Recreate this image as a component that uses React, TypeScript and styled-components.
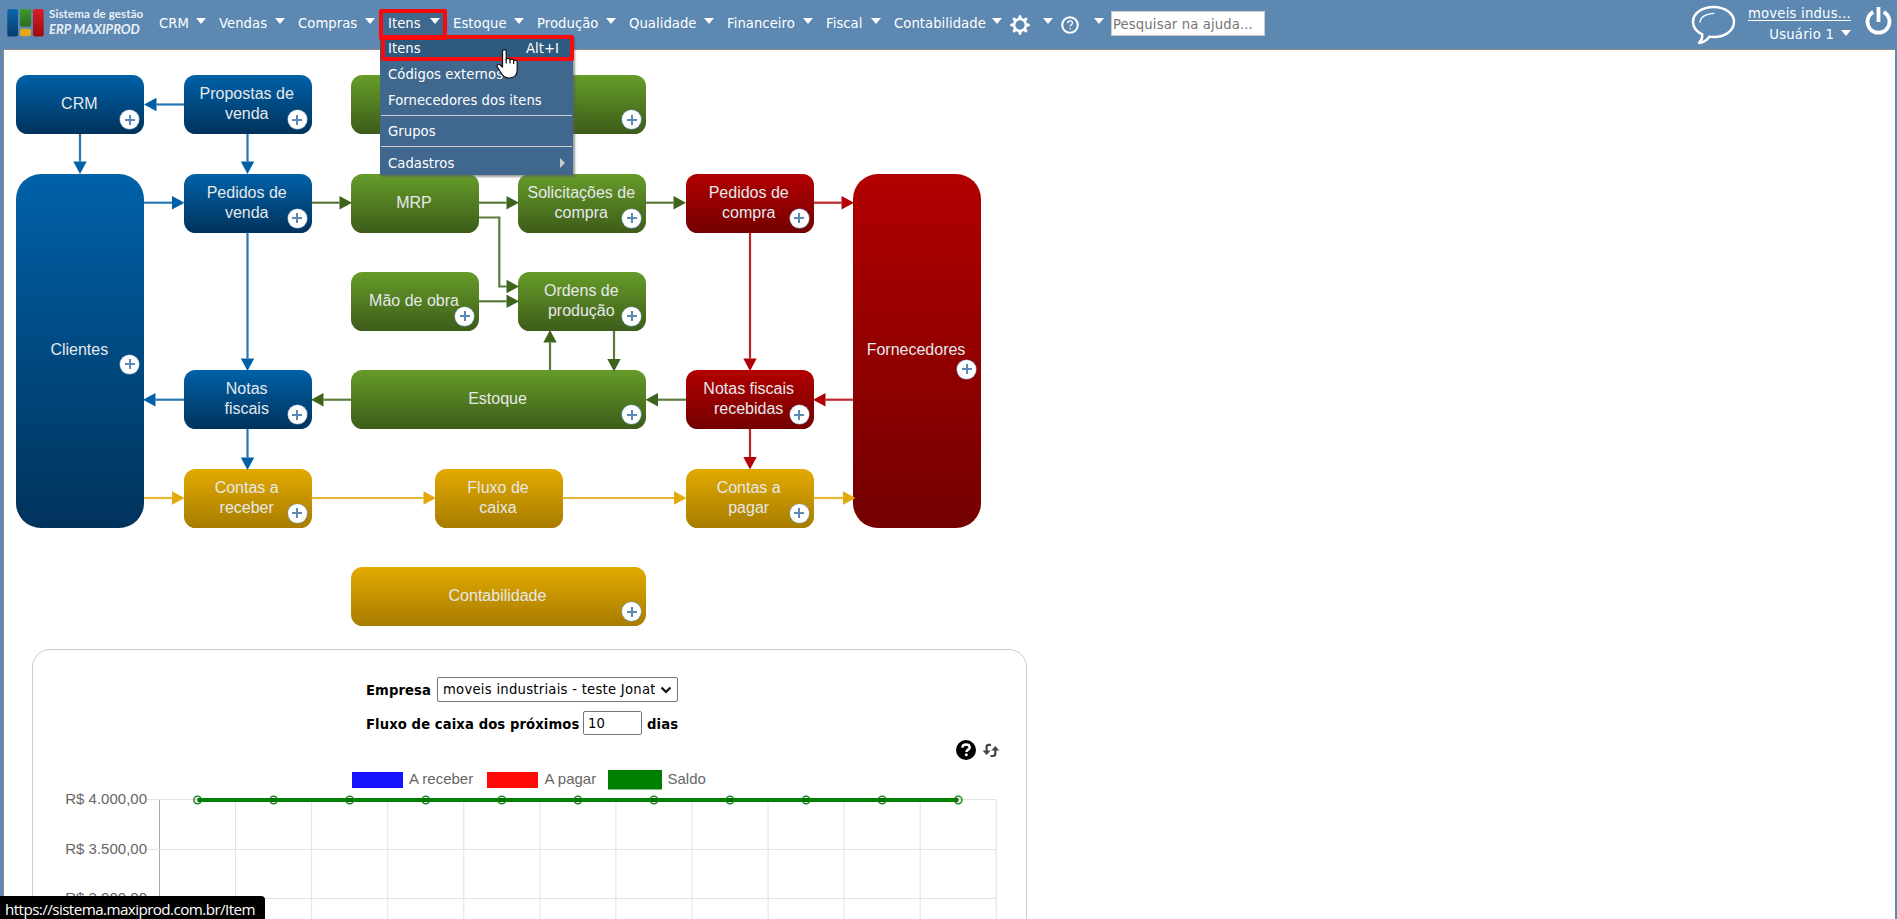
import React from 'react';
import styled, { createGlobalStyle, css } from 'styled-components';

const GlobalStyle = createGlobalStyle`
  * { box-sizing: border-box; }
  html, body { margin: 0; padding: 0; background: #fff; }
  body { overflow: hidden; font-family: Verdana, "DejaVu Sans", sans-serif; font-size: 13.2px; color: #000; }
`;

const Page = styled.div`
  height: 919px;
  display: flex;
  flex-direction: column;
  overflow: hidden;
  background: #5c88b2;
`;

/* ---------- top bar ---------- */

const TopBar = styled.header`
  position: relative;
  z-index: 2;
  flex: 0 0 49px;
  display: flex;
  align-items: flex-start;
  color: #fff;
`;

const Brand = styled.div`
  display: flex;
  width: 151px;
  padding: 8px 0 0 7px;
  gap: 5px;
`;

const BrandText = styled.div`
  font-family: Lato, sans-serif;
  font-weight: 700;
  color: #e9eff5;
  white-space: nowrap;
`;

const BrandTop = styled.div`
  font-size: 11.6px;
  line-height: 12px;
  letter-spacing: 0.08px;
`;

const BrandName = styled.div`
  font-size: 13px;
  line-height: 18px;
  font-style: italic;
`;

const Nav = styled.nav`
  display: flex;
`;

const NavItem = styled.div<{ $w: number; $open?: boolean }>`
  position: relative;
  width: ${(p) => p.$w}px;
  height: 36px;
  padding: 0 5px 0 8px;
  display: flex;
  align-items: center;
  justify-content: space-between;
  white-space: nowrap;
  letter-spacing: 0.05px;
  ${(p) =>
    p.$open &&
    css`
      &::before {
        content: '';
        position: absolute;
        z-index: -1;
        left: 0;
        right: 2px;
        top: 10px;
        bottom: 0;
        background: #40688e;
      }
    `}
`;

const NavLabel = styled.span`
  padding-top: 12px;
  line-height: 16px;
`;

const Caret = styled.i`
  width: 0;
  height: 0;
  margin-top: 6px;
  border: 5px solid transparent;
  border-top: 6px solid #fff;
  border-bottom: 0;
`;

const NavIcon = styled.span`
  display: flex;
  margin: 14px 0 0 -5px;
`;

const SearchInput = styled.input`
  width: 154px;
  height: 25px;
  margin: 11px 0 0 2px;
  padding: 1px 1px 0;
  border: 1px solid #ccc;
  background: #fff;
  font: inherit;
  letter-spacing: 0.13px;
  &::placeholder { color: #757575; opacity: 1; }
`;

const Highlight = styled.div<{ $x: number; $y: number; $w: number; $h: number }>`
  position: absolute;
  z-index: 3;
  left: ${(p) => p.$x}px;
  top: ${(p) => p.$y}px;
  width: ${(p) => p.$w}px;
  height: ${(p) => p.$h}px;
  border: 4px solid #fb0a0a;
  border-radius: 2px;
  pointer-events: none;
`;

const UserArea = styled.div`
  margin-left: auto;
  display: flex;
  align-items: flex-start;
  padding-right: 5px;
`;

const ChatButton = styled.span`
  display: flex;
  margin-top: 4px;
`;

const PowerButton = styled.span`
  display: flex;
  margin-top: 6px;
`;

const UserText = styled.div`
  width: 103px;
  margin: 6px 14px 0 12px;
  display: flex;
  flex-direction: column;
  align-items: flex-end;
  line-height: 16px;
  letter-spacing: 0.22px;
`;

const Company = styled.a`
  color: #fff;
  text-decoration: underline;
  text-underline-offset: 2px;
  white-space: nowrap;
  height: 20px;
`;

const UserName = styled.div`
  display: flex;
  gap: 7px;
  align-items: center;
  height: 17px;
  & > i { margin-top: -3px; }
`;

/* ---------- dropdown ---------- */

const Menu = styled.div`
  position: absolute;
  left: 0;
  top: 36px;
  width: 193px;
  height: 139px;
  padding-top: 1px;
  background: #40688e;
  box-shadow: 2px 2px 2px rgba(90, 90, 90, 0.6);
`;

const MenuRow = styled.div<{ $active?: boolean; $h?: number }>`
  height: ${(p) => p.$h ?? 26}px;
  margin-bottom: ${(p) => (p.$active ? 2 : 0)}px;
  padding: 0 14px 0 8px;
  display: flex;
  align-items: center;
  justify-content: space-between;
  background: ${(p) => (p.$active ? '#2e5a7f' : 'transparent')};
`;

const Divider = styled.div<{ $mt?: number }>`
  height: 1px;
  margin: ${(p) => p.$mt ?? 0}px 1px 0;
  background: #ccc;
`;

const SubCaret = styled.i`
  margin-right: -6px;
  border: 5px solid transparent;
  border-left: 5px solid #c9ccd0;
  border-right: 0;
`;

const Cursor = styled.svg`
  position: absolute;
  z-index: 4;
  left: 496px;
  top: 48px;
`;

/* ---------- content ---------- */

const Content = styled.main`
  flex: 1;
  margin: 0 2px 0 3px;
  border-top: 1px solid #8b8b8b;
  border-left: 1px solid #8b8b8b;
  background: #fff;
  overflow: hidden;
`;

const Flow = styled.section`
  position: relative;
  width: 1000px;
  height: 599px;
`;

const Wires = styled.svg`
  position: absolute;
  inset: 0;
`;

type Tone = 'blue' | 'green' | 'red' | 'gold';

const tones: Record<Tone, [string, string]> = {
  blue: ['#0061a8', '#00335c'],
  green: ['#669c29', '#3d5c19'],
  red: ['#b20000', '#740000'],
  gold: ['#e2aa00', '#a87c00'],
};

const NodeBox = styled.div<{ $x: number; $y: number; $w: number; $h: number; $tone: Tone }>`
  position: absolute;
  left: ${(p) => p.$x - 4}px;
  top: ${(p) => p.$y - 50}px;
  width: ${(p) => p.$w}px;
  height: ${(p) => p.$h}px;
  border-radius: ${(p) => (p.$h > 100 ? 25 : 11.5)}px;
  background: linear-gradient(${(p) => tones[p.$tone][0]}, ${(p) => tones[p.$tone][1]});
  display: flex;
  align-items: center;
  justify-content: center;
  padding: 0 2px 0.5px 0;
  text-align: center;
  white-space: pre-line;
  font: 16px/20px Arial, "Liberation Sans", sans-serif;
  color: #e6e9ec;
`;

const Plus = styled.span<{ $top: number }>`
  position: absolute;
  right: 5px;
  top: ${(p) => p.$top}px;
  width: 19px;
  height: 19px;
  border-radius: 50%;
  background: #fff;
  box-shadow: 0 0 0 0.6px #7d9fc4;
  &::before, &::after {
    content: '';
    position: absolute;
    background: #5b88b6;
  }
  &::before { left: 4.5px; right: 4.5px; top: 8.5px; height: 2px; }
  &::after { top: 4.5px; bottom: 4.5px; left: 8.5px; width: 2px; }
`;

interface FlowNode {
  label: string;
  x: number;
  y: number;
  tone: Tone;
  w?: number;
  h?: number;
  plus?: number;
}

const nodes: FlowNode[] = [
  { label: 'CRM', x: 16.3, y: 75, tone: 'blue', plus: 35 },
  { label: 'Propostas de\nvenda', x: 183.7, y: 75, tone: 'blue', plus: 35 },
  { label: '', x: 351, y: 75, w: 295, tone: 'green', plus: 35 },
  { label: 'Clientes', x: 16.3, y: 173.5, h: 354, tone: 'blue', plus: 181 },
  { label: 'Pedidos de\nvenda', x: 183.7, y: 173.5, tone: 'blue', plus: 35 },
  { label: 'MRP', x: 351, y: 173.5, tone: 'green' },
  { label: 'Solicitações de\ncompra', x: 518.3, y: 173.5, tone: 'green', plus: 35 },
  { label: 'Pedidos de\ncompra', x: 685.7, y: 173.5, tone: 'red', plus: 35 },
  { label: 'Fornecedores', x: 853, y: 173.5, h: 354, tone: 'red', plus: 186 },
  { label: 'Mão de obra', x: 351, y: 271.8, tone: 'green', plus: 35 },
  { label: 'Ordens de\nprodução', x: 518.3, y: 271.8, tone: 'green', plus: 35 },
  { label: 'Notas\nfiscais', x: 183.7, y: 370.2, tone: 'blue', plus: 35 },
  { label: 'Estoque', x: 351, y: 370.2, w: 295, tone: 'green', plus: 35 },
  { label: 'Notas fiscais\nrecebidas', x: 685.7, y: 370.2, tone: 'red', plus: 35 },
  { label: 'Contas a\nreceber', x: 183.7, y: 468.6, tone: 'gold', plus: 35 },
  { label: 'Fluxo de\ncaixa', x: 435, y: 468.6, tone: 'gold' },
  { label: 'Contas a\npagar', x: 685.7, y: 468.6, tone: 'gold', plus: 35 },
  { label: 'Contabilidade', x: 351, y: 567, w: 295, tone: 'gold', plus: 35 },
];

const BLUE = '#0060a7';
const GREEN = '#3e641b';
const RED = '#b20004';
const GOLD = '#e2aa0c';

const wires: { c: string; p: [number, number][] }[] = [
  { c: BLUE, p: [[80, 134], [80, 174]] },
  { c: BLUE, p: [[184, 104.5], [144, 104.5]] },
  { c: BLUE, p: [[247.5, 134], [247.5, 174]] },
  { c: BLUE, p: [[144, 202.7], [184.5, 202.7]] },
  { c: GREEN, p: [[311, 202.7], [352, 202.7]] },
  { c: GREEN, p: [[479, 202.7], [519, 202.7]] },
  { c: GREEN, p: [[646, 202.7], [686, 202.7]] },
  { c: RED, p: [[813, 202.7], [854, 202.7]] },
  { c: GREEN, p: [[479, 217.5], [499.3, 217.5], [499.3, 286.5], [519, 286.5]] },
  { c: GREEN, p: [[479, 301.3], [519, 301.3]] },
  { c: BLUE, p: [[247.5, 232], [247.5, 371]] },
  { c: RED, p: [[750, 232], [750, 371]] },
  { c: GREEN, p: [[550, 370], [550, 330]] },
  { c: GREEN, p: [[614, 330], [614, 371.5]] },
  { c: BLUE, p: [[184, 399.7], [143, 399.7]] },
  { c: GREEN, p: [[351, 399.7], [311, 399.7]] },
  { c: GREEN, p: [[686, 399.7], [645.5, 399.7]] },
  { c: RED, p: [[853, 399.7], [813, 399.7]] },
  { c: BLUE, p: [[247.5, 429], [247.5, 470]] },
  { c: RED, p: [[750, 429], [750, 469.5]] },
  { c: GOLD, p: [[144, 498], [184.5, 498]] },
  { c: GOLD, p: [[311, 498], [436, 498]] },
  { c: GOLD, p: [[562, 498], [686.5, 498]] },
  { c: GOLD, p: [[813, 498], [855.5, 498]] },
];

function Wire({ c, p }: { c: string; p: [number, number][] }) {
  const [ex, ey] = p[p.length - 1];
  const [px, py] = p[p.length - 2];
  const dx = Math.sign(ex - px);
  const dy = Math.sign(ey - py);
  const bx = ex - dx * 12.5;
  const by = ey - dy * 12.5;
  const line = [...p.slice(0, -1), [bx, by]].map((q) => q.join(',')).join(' ');
  const head = `${ex},${ey} ${bx + dy * 6.7},${by + dx * 6.7} ${bx - dy * 6.7},${by - dx * 6.7}`;
  return (
    <g>
      <polyline points={line} fill="none" stroke={c} strokeWidth={2.2} strokeOpacity={0.85} />
      <polygon points={head} fill={c} />
    </g>
  );
}

/* ---------- cash-flow card ---------- */

const Card = styled.section`
  width: 995px;
  height: 400px;
  margin-left: 28px;
  border: 1px solid #ccc;
  border-radius: 18px;
  display: flex;
  flex-direction: column;
`;

const Form = styled.div`
  padding: 27px 0 0 333px;
  display: flex;
  flex-direction: column;
  gap: 9px;
  font-weight: 700;
  letter-spacing: 0.09px;
`;

const FormRow = styled.div<{ $h: number }>`
  display: flex;
  align-items: center;
  height: ${(p) => p.$h}px;
  white-space: nowrap;
`;

const FieldLabel = styled.label<{ $w: number }>`
  width: ${(p) => p.$w}px;
  padding-top: 2px;
`;

const SelectBox = styled.div`
  width: 241px;
  height: 25px;
  padding: 0 5px 0 5px;
  display: flex;
  align-items: center;
  border: 1px solid #767676;
  border-radius: 2px;
  font-weight: 400;
  letter-spacing: 0.26px;
`;

const SelectValue = styled.span`
  width: 213px;
  margin-right: 5px;
  overflow: hidden;
`;

const DaysInput = styled.input`
  width: 59px;
  height: 24px;
  margin-right: 5px;
  padding: 0 4px;
  border: 1px solid #767676;
  border-radius: 2px;
  font: inherit;
  font-weight: 400;
  letter-spacing: 0;
`;

const Tools = styled.div`
  height: 22px;
  margin-top: 4px;
  padding-right: 26px;
  display: flex;
  align-items: center;
  justify-content: flex-end;
  gap: 6px;
`;

const Chart = styled.svg`
  display: block;
  flex: none;
  margin-top: 2px;
  font: 15px Arial, "Liberation Sans", sans-serif;
`;

const StatusBubble = styled.div`
  position: absolute;
  z-index: 5;
  left: 0;
  top: 896px;
  width: 265px;
  height: 23px;
  padding-left: 5px;
  border-top-right-radius: 4px;
  background: #000;
  color: #fff;
  font: 15.2px/27px "Segoe UI", "Open Sans", "Noto Sans", sans-serif;
  letter-spacing: -0.57px;
  white-space: nowrap;
`;

const menuItems: [string, number][] = [
  ['CRM', 60], ['Vendas', 79], ['Compras', 90], ['Itens', 65], ['Estoque', 84],
  ['Produção', 92], ['Qualidade', 98], ['Financeiro', 99], ['Fiscal', 68], ['Contabilidade', 121],
];

function Logo() {
  return (
    <svg width="37" height="29" viewBox="0 0 37 29">
      <defs>
        <linearGradient id="lb" x2="0" y2="1"><stop stopColor="#0a66ab" /><stop offset="1" stopColor="#063c6b" /></linearGradient>
        <linearGradient id="lg" x2="0" y2="1"><stop stopColor="#3f9a2c" /><stop offset="1" stopColor="#2d6c1a" /></linearGradient>
        <linearGradient id="lr" x2="0" y2="1"><stop stopColor="#d8202a" /><stop offset="1" stopColor="#9c0a10" /></linearGradient>
      </defs>
      <rect x="0.3" y="1" width="10.7" height="27.5" rx="2" fill="url(#lb)" />
      <rect x="13" y="1" width="11" height="17.5" rx="2" fill="url(#lg)" />
      <rect x="13" y="20.8" width="11" height="7.4" rx="2" fill="#e3a71c" />
      <rect x="26" y="1" width="10.7" height="27.5" rx="2" fill="url(#lr)" />
    </svg>
  );
}

function Gear() {
  return (
    <svg width="20" height="20" viewBox="0 0 20 20">
      <circle cx="10" cy="10" r="5.9" fill="none" stroke="#fff" strokeWidth="2.5" />
      {[0, 45, 90, 135, 180, 225, 270, 315].map((a) => (
        <path key={a} d="M8.1 3.6 8.9 0.3h2.2l0.8 3.3z" fill="#fff" transform={`rotate(${a} 10 10)`} />
      ))}
    </svg>
  );
}

function HelpRing() {
  return (
    <svg width="18" height="18" viewBox="0 0 18 18" fill="none" stroke="#fff">
      <circle cx="9" cy="9" r="7.8" strokeWidth="2" />
      <path d="M6.6 7.2c.1-1.5 1.1-2.3 2.5-2.3s2.4.8 2.4 2c0 1.7-2.3 1.8-2.3 3.7" strokeWidth="1.3" />
      <circle cx="9.2" cy="12.8" r="0.4" strokeWidth="0.9" />
    </svg>
  );
}

function ChatBubble() {
  return (
    <svg width="45" height="41" viewBox="0 0 45 41" fill="none" stroke="#fff" strokeLinejoin="round" strokeLinecap="round">
      <path
        d="M22.5 3C34 3 43 9.500 43 18S34 33 23 33c-1.500 0-3 0-4.500-.4C16.500 35.500 13 38.500 8 39c2-2 3.500-5.300 3.300-8.500C5.500 27.700 2 23 2 18 2 9.500 11 3 22.500 3z"
        strokeWidth="2.5"
      />
      <path d="M9 18c.5-5 6-8.500 14-8.700" strokeWidth="1.300" />
    </svg>
  );
}

function Power() {
  return (
    <svg width="27" height="30" viewBox="0 0 27 30" fill="none" stroke="#fff">
      <path d="M8.3 6A11 11 0 1 0 18.700 6" strokeWidth="3.800" />
      <path d="M13.500 1V16" strokeWidth="3.800" />
    </svg>
  );
}

function HandCursor() {
  return (
    <Cursor width="24" height="32" viewBox="0 0 24 32">
      <path
        d="M6.500 3.500C6.500 1 10.200 1 10.200 3.500V11.500c.3-1.600 3.600-1.600 3.800.3.600-1.200 3.500-.9 3.700.8.900-.9 3.500-.6 3.500 1.700V22c0 5-2.200 8-8.200 8-5 0-7-2.800-8.500-6L1.200 18.800C.3 16.500 3 15.300 4.600 17.300L6.500 19z"
        fill="#fff" stroke="#111" strokeWidth="1.200" strokeLinejoin="round"
      />
      <path d="M10.200 11V15.500M14 12V15.500M17.700 13V16" stroke="#111" strokeWidth="1.200" />
    </Cursor>
  );
}

function CashChart() {
  const step = 76.07;
  const left = 126.5;
  const xs = Array.from({ length: 12 }, (_, i) => left + i * step);
  const pts = Array.from({ length: 11 }, (_, i) => left + step / 2 + i * step);
  const rows: [string, number][] = [['R$ 4.000,00', 36.5], ['R$ 3.500,00', 86.5], ['R$ 3.000,00', 135.5]];
  return (
    <Chart width="993" height="160" viewBox="0 0 993 160" fill="#666">
      <rect x="319" y="9" width="51" height="16" fill="#1414ff" />
      <text x="376" y="21">A receber</text>
      <rect x="454" y="9" width="51" height="16" fill="#ff0808" />
      <text x="511.5" y="21">A pagar</text>
      <rect x="575" y="7" width="54" height="19.5" fill="#008000" />
      <text x="634.5" y="21">Saldo</text>
      {xs.map((x, i) => (
        <line key={x} x1={x} x2={x} y1={36} y2={160} stroke={i ? '#e2e2e2' : '#a8a8a8'} />
      ))}
      {rows.map(([label, y], i) => (
        <g key={label}>
          <line x1={114} x2={963.5} y1={y} y2={y} stroke="#e2e2e2" />
          <text x={114} y={y + (i ? 4 : 4.5)} textAnchor="end">{label}</text>
        </g>
      ))}
      <line x1={pts[0]} x2={pts[10]} y1={37} y2={37} stroke="#008000" strokeWidth={4} />
      {pts.map((x) => (
        <circle key={x} cx={x} cy={37} r={3.8} fill="rgba(0,0,0,0.1)" stroke="#0a800a" strokeWidth={1.3} />
      ))}
    </Chart>
  );
}

export default function App() {
  return (
    <Page>
      <GlobalStyle />
      <TopBar>
        <Brand>
          <Logo />
          <BrandText>
            <BrandTop>Sistema de gestão</BrandTop>
            <BrandName>ERP MAXIPROD</BrandName>
          </BrandText>
        </Brand>
        <Nav>
          {menuItems.map(([label, w]) => (
            <NavItem key={label} $w={w} $open={label === 'Itens'}>
              <NavLabel>{label}</NavLabel>
              <Caret />
              {label === 'Itens' && (
                <Menu>
                  <MenuRow $active $h={22}><span>Itens</span><span>Alt+I</span></MenuRow>
                  <MenuRow><span>Códigos externos</span></MenuRow>
                  <MenuRow><span>Fornecedores dos itens</span></MenuRow>
                  <Divider $mt={2} />
                  <MenuRow $h={30}><span>Grupos</span></MenuRow>
                  <Divider />
                  <MenuRow $h={32}><span>Cadastros</span><SubCaret /></MenuRow>
                </Menu>
              )}
            </NavItem>
          ))}
          <NavItem $w={51}><NavIcon><Gear /></NavIcon><Caret /></NavItem>
          <NavItem $w={51}><NavIcon><HelpRing /></NavIcon><Caret /></NavItem>
        </Nav>
        <SearchInput placeholder="Pesquisar na ajuda..." />
        <UserArea>
          <ChatButton><ChatBubble /></ChatButton>
          <UserText>
            <Company>moveis indus...</Company>
            <UserName><span>Usuário 1</span><Caret /></UserName>
          </UserText>
          <PowerButton><Power /></PowerButton>
        </UserArea>
        <Highlight $x={379} $y={8.5} $w={68} $h={31} />
        <Highlight $x={381} $y={35} $w={192.5} $h={25.5} />
        <HandCursor />
      </TopBar>
      <Content>
        <Flow>
          {nodes.map((n, i) => (
            <NodeBox key={i} $x={n.x} $y={n.y} $w={n.w ?? 128} $h={n.h ?? 59} $tone={n.tone}>
              {n.label}
              {n.plus && <Plus $top={n.plus} />}
            </NodeBox>
          ))}
          <Wires width="1000" height="599" viewBox="4 50 1000 599">
            {wires.map((w, i) => <Wire key={i} {...w} />)}
          </Wires>
        </Flow>
        <Card>
          <Form>
            <FormRow $h={25}>
              <FieldLabel $w={71}>Empresa</FieldLabel>
              <SelectBox>
                <SelectValue>moveis industriais - teste Jonathan</SelectValue>
                <svg width="12" height="8" viewBox="0 0 12 8"><path d="M1.5 1.5 6 6l4.500-4.500" fill="none" stroke="#111" strokeWidth="2.300" /></svg>
              </SelectBox>
            </FormRow>
            <FormRow $h={24}>
              <FieldLabel $w={217}>Fluxo de caixa dos próximos</FieldLabel>
              <DaysInput defaultValue="10" />
              <FieldLabel $w={32}>dias</FieldLabel>
            </FormRow>
          </Form>
          <Tools>
            <svg width="20" height="20" viewBox="0 0 20 20">
              <circle cx="10" cy="10" r="10" fill="#000" />
              <path d="M6.3 7.7C6.500 5.500 8 4.400 10.100 4.400s3.600 1.200 3.600 3c0 2.200-3.300 2.300-3.300 4.600" fill="none" stroke="#fff" strokeWidth="2.500" />
              <circle cx="10.300" cy="14.800" r="1.500" fill="#fff" />
            </svg>
            <svg width="18" height="15" viewBox="0 0 18 15" fill="none" stroke="#444">
              <path d="M9 1.800H6.800Q4.600 1.800 4.600 4V8" strokeWidth="2.200" />
              <path d="M0.600 7.500h8L4.600 12z" fill="#444" stroke="none" />
              <path d="M8.500 13H11q2.300 0 2.300-2.200V7" strokeWidth="2.200" />
              <path d="M9.300 7.500h8L13.300 3z" fill="#444" stroke="none" />
            </svg>
          </Tools>
          <CashChart />
        </Card>
      </Content>
      <StatusBubble>https://sistema.maxiprod.com.br/Item</StatusBubble>
    </Page>
  );
}
